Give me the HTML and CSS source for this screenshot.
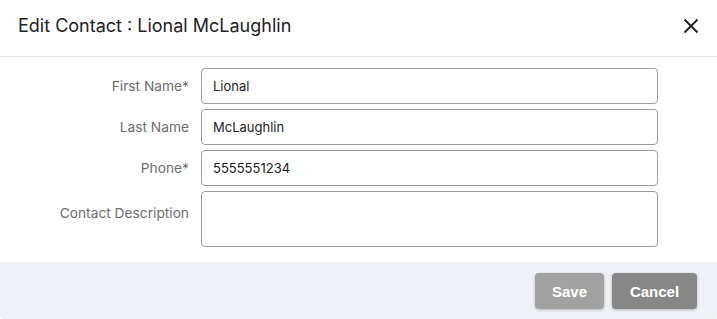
FILE: index.html
```html
<!DOCTYPE html>
<html>
<head>
<meta charset="utf-8">
<link rel="stylesheet" href="styles.css">
</head>
<body>
<div class="dialog">
  <div class="header">
    <div class="title">Edit Contact : Lional McLaughlin</div>
    <button class="close" aria-label="Close">
      <svg width="16" height="16" viewBox="0 0 16 16"><path d="M1.5 1.5 L14.5 14.5 M14.5 1.5 L1.5 14.5" stroke="#222" stroke-width="2" fill="none"/></svg>
    </button>
  </div>
  <div class="form">
    <label class="label">First Name*</label>
    <div class="input">Lional</div>
    <label class="label">Last Name</label>
    <div class="input">McLaughlin</div>
    <label class="label">Phone*</label>
    <div class="input">5555551234</div>
    <label class="label label-top">Contact Description</label>
    <div class="input textarea"></div>
  </div>
  <div class="footer">
    <button class="btn btn-save">Save</button>
    <button class="btn btn-cancel">Cancel</button>
  </div>
</div>
</body>
</html>
```

FILE: styles.css
```css
* { box-sizing: border-box; }
html, body { margin: 0; padding: 0; background: #fff; }
body { font-family: Inter, "Noto Sans", sans-serif; color: #222; }
.dialog { width: 717px; height: 319px; display: flex; flex-direction: column; }
.header {
  height: 57px;
  border-bottom: 1px solid #e4e4e4;
  display: flex;
  align-items: center;
  justify-content: space-between;
  padding: 0 18px 0 18px;
}
.title { font-size: 18px; color: #222; font-weight: 400; padding-bottom: 5px; }
.close { background: none; border: 0; padding: 0; width: 16px; height: 16px; display: flex; margin-bottom: 5px; }
.form {
  display: grid;
  grid-template-columns: 189px 457px;
  column-gap: 12px;
  row-gap: 5px;
  padding: 11px 0 15px 0;
}
.label {
  font-size: 13.75px;
  color: #6e6e6e;
  text-align: right;
  align-self: center;
}
.label-top { align-self: start; padding-top: 14px; }
.input {
  height: 36px;
  border: 1px solid #9e9e9e;
  border-radius: 4px;
  font-size: 13px;
  color: #222;
  padding: 0 11px;
  display: flex;
  align-items: center;
}
.textarea { height: 56px; }
.footer {
  flex: 1;
  background: #eef1f5;
  display: flex;
  justify-content: flex-end;
  align-items: flex-start;
  gap: 8px;
  padding: 11px 20px 0 0;
  border-radius: 0 0 4px 4px;
}
.btn {
  height: 36px;
  border: 0;
  border-radius: 4px;
  color: #fff;
  font-family: "Liberation Sans", Arial, sans-serif;
  font-weight: 700;
  font-size: 15px;
  padding: 0;
  box-shadow: 0 1px 3px rgba(0,0,0,0.25);
}
.btn-save { background: #a2a2a2; width: 69px; }
.btn-cancel { background: #878787; width: 85px; }
```
